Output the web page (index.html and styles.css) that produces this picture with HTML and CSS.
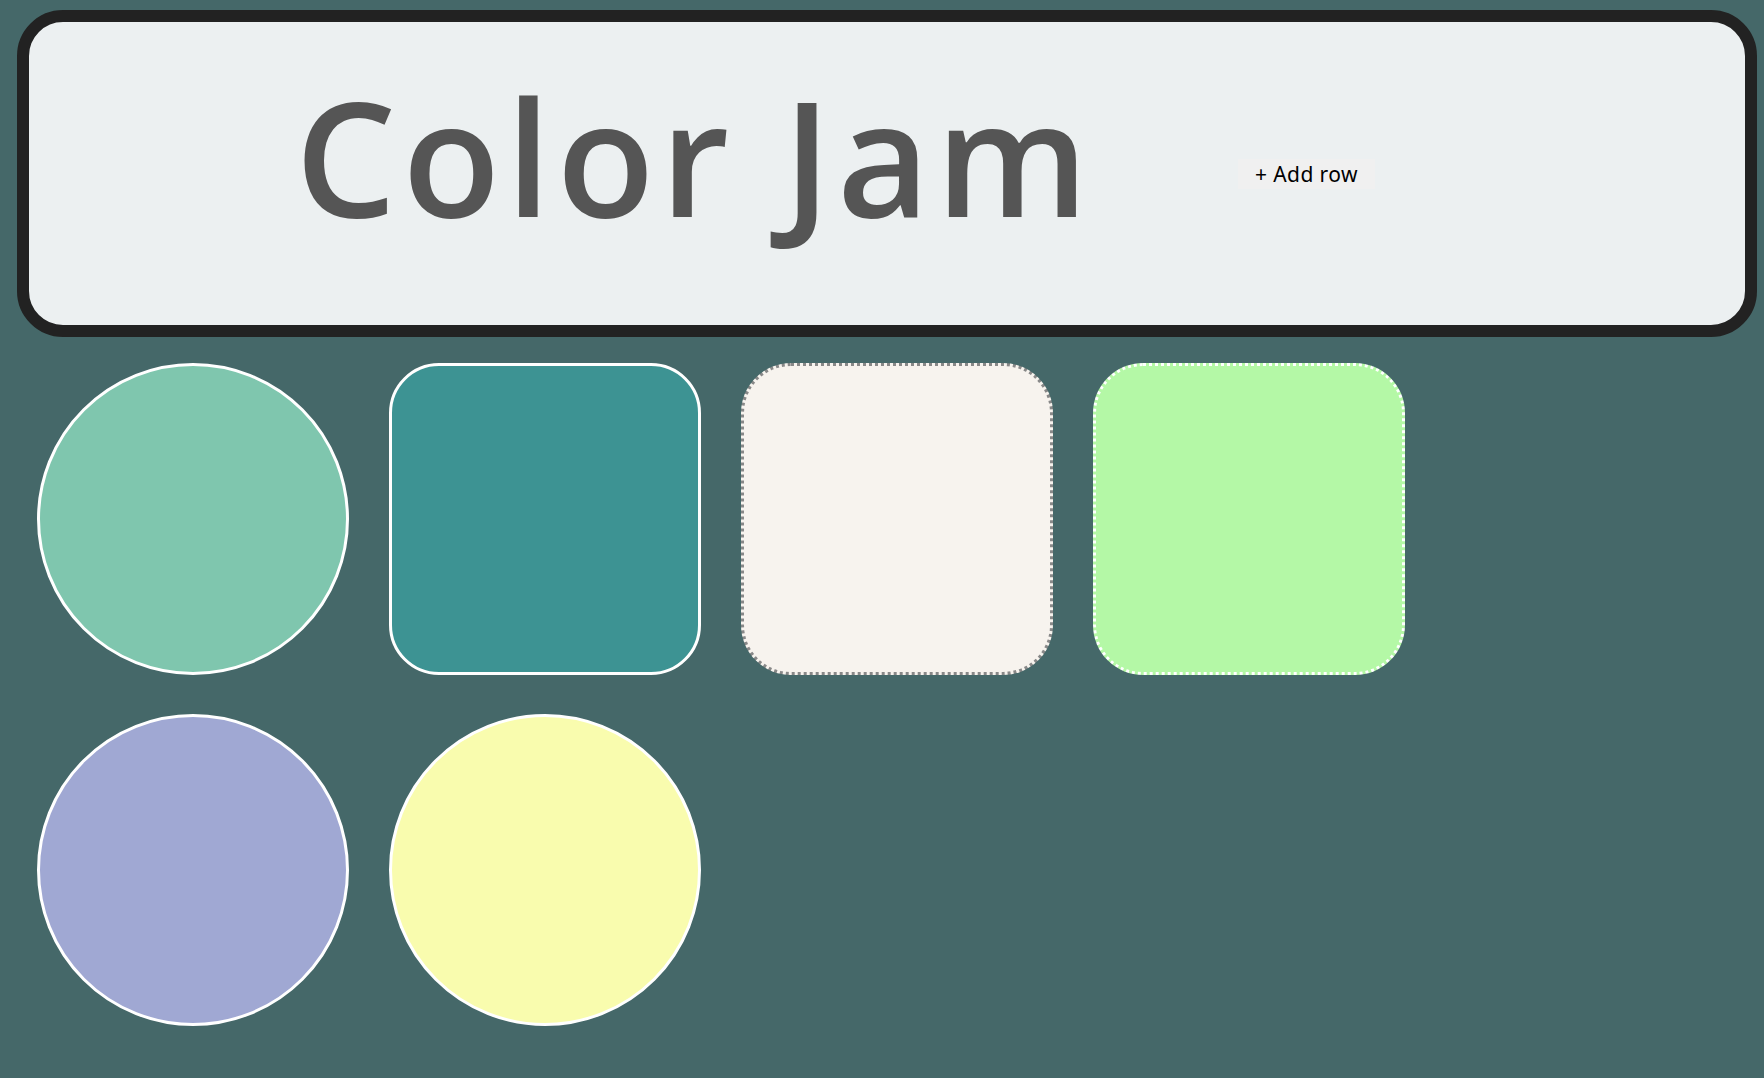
FILE: index.html
```html
<!DOCTYPE html>
<html>
<head>
<meta charset="utf-8">
<title>Color Jam</title>
<link rel="stylesheet" href="styles.css">
</head>
<body>
<header class="header">
  <h1 class="title">Color Jam</h1>
  <button class="add-row">+ Add row</button>
</header>
<main class="swatches">
  <div class="swatch circle c1"></div>
  <div class="swatch rounded c2"></div>
  <div class="swatch rounded dotted-gray c3"></div>
  <div class="swatch rounded dotted-white c4"></div>
  <div class="swatch circle c5"></div>
  <div class="swatch circle c6"></div>
</main>
</body>
</html>
```

FILE: styles.css
```css
html, body {
  margin: 0;
  padding: 0;
}
body {
  background: #456869;
  font-family: "DejaVu Sans", sans-serif;
  min-height: 1078px;
}
.header {
  margin: 10px 7px 0 17px;
  height: 303px;
  border: 12px solid #222222;
  border-radius: 46px;
  background: #ecf0f1;
  display: flex;
  align-items: center;
  padding-left: 266px;
}
.title {
  margin: 0;
  flex: 0 0 auto;
  width: 943px;
  font-family: "Open Sans", sans-serif;
  font-weight: 650;
  font-stretch: 88%;
  font-size: 160px;
  line-height: 1;
  color: #555555;
  letter-spacing: 6px;
  position: relative;
  top: -19px;
  white-space: nowrap;
}
.add-row {
  margin: 0;
  border: none;
  background: #f0f0f0;
  font-family: "Noto Sans", "DejaVu Sans", sans-serif;
  font-size: 21px;
  letter-spacing: 0.4px;
  color: #000;
  height: 30px;
  padding: 0 17px;
}
.swatches {
  display: grid;
  grid-template-columns: repeat(4, 312px);
  column-gap: 40px;
  row-gap: 39px;
  padding: 26px 0 0 37px;
}
.swatch {
  box-sizing: border-box;
  width: 312px;
  height: 312px;
  border: 3px solid #ffffff;
}
.circle { border-radius: 50%; }
.rounded { border-radius: 50px; }
.dotted-gray { border: 3px dotted #888888; }
.dotted-white { border: 3px dotted #ffffff; }
.c1 { background: #7fc6ae; }
.c2 { background: #3d9393; }
.c3 { background: #f7f3ee; }
.c4 { background: #b4f8a6; }
.c5 { background: #a0a8d3; }
.c6 { background: #f9fcae; }
```
